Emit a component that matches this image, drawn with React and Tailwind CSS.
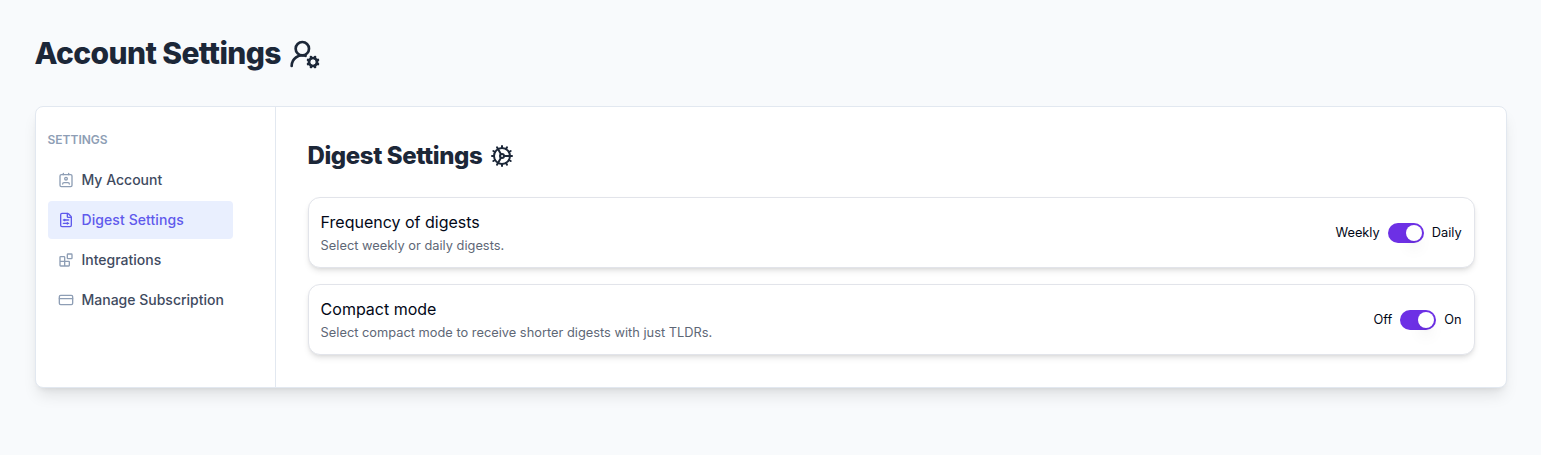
import { Cog, CreditCard, FileSliders, UserRoundCog } from "lucide-react";

function LineIcon({ size = 16, className = "", children }) {
  return (
    <svg
      width={size}
      height={size}
      viewBox="0 0 24 24"
      fill="none"
      stroke="currentColor"
      strokeWidth="2"
      strokeLinecap="round"
      strokeLinejoin="round"
      className={className}
    >
      {children}
    </svg>
  );
}

function ContactIcon(props) {
  return (
    <LineIcon {...props}>
      <path d="M17 18a2 2 0 0 0-2-2H9a2 2 0 0 0-2 2" />
      <rect width="18" height="18" x="3" y="4" rx="2" />
      <circle cx="12" cy="10" r="2" />
      <path d="M8 2v2M16 2v2" />
    </LineIcon>
  );
}

function BlocksIcon(props) {
  return (
    <LineIcon {...props}>
      <rect width="7" height="7" x="14" y="3" rx="1" />
      <path d="M10 21V8a1 1 0 0 0-1-1H4a1 1 0 0 0-1 1v12a1 1 0 0 0 1 1h12a1 1 0 0 0 1-1v-5a1 1 0 0 0-1-1H3" />
    </LineIcon>
  );
}

const NAV = [
  { label: "My Account", icon: ContactIcon },
  { label: "Digest Settings", icon: FileSliders, active: true },
  { label: "Integrations", icon: BlocksIcon },
  { label: "Manage Subscription", icon: CreditCard },
];

function NavItem({ label, icon: Icon, active }) {
  return (
    <a
      className={`flex h-[38px] items-center gap-2 rounded px-2.5 text-sm font-medium ${
        active ? "bg-[#e9effe] tracking-[0.08px] text-[#5f5aec]" : "text-[#3f4b5f]"
      }`}
    >
      <Icon size={16} className={active ? "shrink-0 text-[#5f5aec]" : "shrink-0 text-[#8e9eb5]"} />
      <span className="-ml-[0.5px] whitespace-nowrap">{label}</span>
    </a>
  );
}

function Toggle() {
  return (
    <button role="switch" aria-checked="true" className="flex h-5 w-9 items-center justify-end rounded-full bg-[#6d30e5] p-0.5">
      <span className="size-4 rounded-full bg-white shadow-lg" />
    </button>
  );
}

function SettingRow({ title, description, off, on }) {
  return (
    <div className="flex h-[71px] items-center justify-between rounded-xl border border-[#e2e4ea] bg-white pr-[12.4px] pl-[11.6px] shadow-md">
      <div>
        <h3 className="text-base leading-6 text-[#020817]">{title}</h3>
        <p className="-mb-px pt-px text-[12.8px] leading-[22px] tracking-[0.015px] text-[#5e6776]">{description}</p>
      </div>
      <div className="flex items-center gap-2 text-[12.8px] leading-5 text-[#020817]">
        <span>{off}</span>
        <Toggle />
        <span>{on}</span>
      </div>
    </div>
  );
}

export default function App() {
  return (
    <div className="min-h-screen bg-[#f8fafc] px-[35px] pt-8 pb-16 font-['Inter',sans-serif]">
      <h1 className="flex items-center gap-2 text-[30px] leading-[42px] font-extrabold tracking-[-0.6px] text-[#1c2738]">
        <span className="-ml-[0.5px]">Account Settings</span>
        <UserRoundCog size={32} className="mt-0.5" />
      </h1>
      <div className="mt-8 flex h-[282px] w-[1472px] rounded-lg border border-[#e2e8f0] bg-white shadow-lg">
        <nav className="w-60 shrink-0 border-r border-[#e2e8f0] pt-6 pr-[42px] pl-3">
          <div className="mb-3 -ml-[0.5px] text-xs leading-[18px] font-semibold text-[#8e9eb5]">SETTINGS</div>
          <div className="flex flex-col gap-0.5">
            {NAV.map((item) => (
              <NavItem key={item.label} {...item} />
            ))}
          </div>
        </nav>
        <main className="flex-1 pt-8 pr-[31px] pl-8">
          <h2 className="mb-6 flex items-center gap-2 text-2xl leading-[34px] font-extrabold tracking-[-0.4px] text-[#1c2738]">
            <span className="-ml-[0.5px]">Digest Settings</span>
            <Cog size={24} />
          </h2>
          <div className="flex flex-col gap-4">
            <SettingRow title="Frequency of digests" description="Select weekly or daily digests." off="Weekly" on="Daily" />
            <SettingRow
              title="Compact mode"
              description="Select compact mode to receive shorter digests with just TLDRs."
              off="Off"
              on="On"
            />
          </div>
        </main>
      </div>
    </div>
  );
}
